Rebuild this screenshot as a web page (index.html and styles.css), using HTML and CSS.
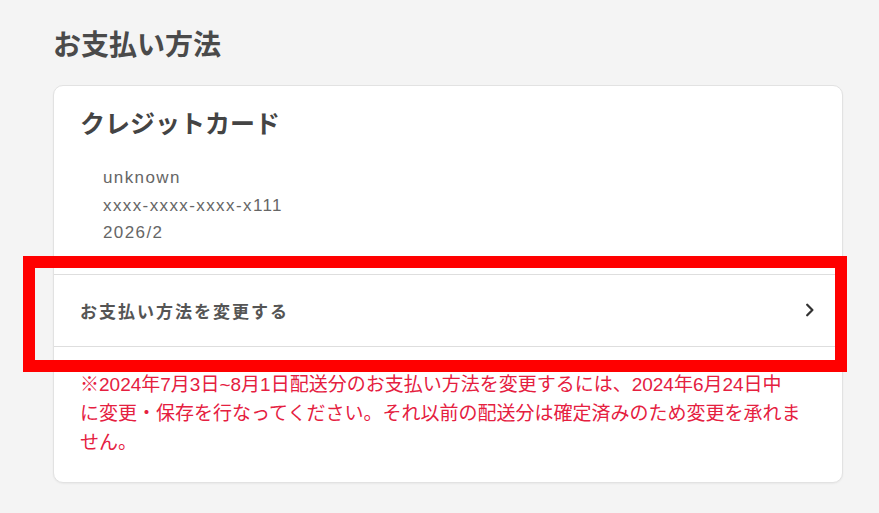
FILE: index.html
```html
<!DOCTYPE html>
<html lang="ja">

<head>
    <meta charset="UTF-8" />
    <meta name="viewport" content="width=device-width, initial-scale=1.0" />
    <title>お支払い方法</title>
    <link rel="stylesheet" href="styles.css">
</head>

<body>
    <div class="page">
        <h1 class="page-title">お支払い方法</h1>

        <div class="payment-card">
            <h2 class="card-title">クレジットカード</h2>
            <div class="card-info">
                <p>unknown</p>
                <p>xxxx-xxxx-xxxx-x111</p>
                <p>2026/2</p>
            </div>

            <a class="change-link" href="#">
                <span>お支払い方法を変更する</span>
                <svg class="chevron" width="10" height="14" viewBox="0 0 10 14">
                    <path d="M2.2 1.8 L7.4 7 L2.2 12.2" fill="none" stroke="#333" stroke-width="2.3" stroke-linecap="round" stroke-linejoin="round" />
                </svg>
                <span class="highlight"></span>
            </a>

            <p class="notice">※2024年7月3日~8月1日配送分のお支払い方法を変更するには、2024年6月24日中<br>に変更・保存を行なってください。それ以前の配送分は確定済みのため変更を承れません。</p>
        </div>
    </div>
</body>

</html>
```

FILE: styles.css
```css
* {
    box-sizing: border-box;
}

body {
    margin: 0;
    background-color: #f4f4f4;
    font-family: "Liberation Sans", "Noto Sans CJK JP", sans-serif;
    color: #444;
}

.page {
    padding: 26px 36px 30px 53px;
}

.page-title {
    margin: 0;
    font-size: 28px;
    line-height: 40px;
    font-weight: 700;
    color: #4a4a4a;
}

.payment-card {
    margin-top: 19px;
    width: 790px;
    background-color: #fff;
    border: 1px solid #e2e2e2;
    border-radius: 10px;
    box-shadow: 0 1px 2px rgba(0, 0, 0, 0.05);
}

.card-title {
    margin: 0;
    padding: 20px 26px 0;
    font-size: 25px;
    line-height: 36px;
    font-weight: 700;
    color: #444;
}

.card-info {
    padding: 22px 0 0 49px;
    margin-bottom: 27px;
}

.card-info p {
    margin: 0;
    font-size: 17px;
    line-height: 27.5px;
    letter-spacing: 1.4px;
    color: #666;
}

.change-link {
    position: relative;
    display: flex;
    align-items: center;
    justify-content: space-between;
    height: 73px;
    padding: 0 27px 0 26px;
    border-top: 1px solid #dedede;
    border-bottom: 1px solid #dedede;
    color: #555;
    text-decoration: none;
    font-size: 17px;
    font-weight: 700;
    letter-spacing: 2px;
}

.chevron {
    display: block;
}

/* red frame drawn around the change link */
.highlight {
    position: absolute;
    top: -19px;
    bottom: -26px;
    left: -31px;
    right: -5px;
    border: 12px solid #ff0000;
    pointer-events: none;
}

.notice {
    margin: 0;
    padding: 23px 26px 25px;
    font-size: 19px;
    line-height: 29px;
    color: #e5203f;
}
```
